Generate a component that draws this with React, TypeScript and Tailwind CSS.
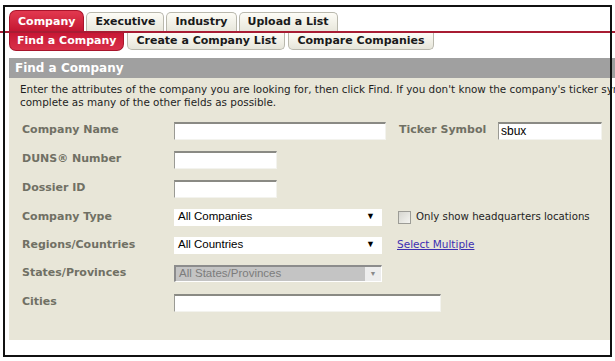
import React from "react"

const verdana = { fontFamily: '"DejaVu Sans", Verdana, sans-serif' }
const arial = { fontFamily: '"Liberation Sans", Arial, sans-serif' }

const TopTab = ({ label, active }: { label: string; active?: boolean }) =>
  active ? (
    <div className="h-[21px] px-[8px] pt-[3px] rounded-t-[7px] bg-gradient-to-b from-[#e2384f] to-[#c41532] text-white text-[11px] font-bold border border-b-0 border-[#a8142b]">
      {label}
    </div>
  ) : (
    <div className="h-[19px] px-[8px] pt-[1px] rounded-t-[5px] bg-gradient-to-b from-[#fdfcf6] to-[#e8e7dc] text-[#1a1a1a] text-[11px] font-bold border border-b-0 border-[#b9b8ad]">
      {label}
    </div>
  )

const SubTab = ({ label, active }: { label: string; active?: boolean }) =>
  active ? (
    <div className="h-[18px] px-[7px] rounded-b-[7px] bg-gradient-to-b from-[#c81634] to-[#d9304a] text-white text-[11px] font-bold leading-[16px] border border-t-0 border-[#a8142b]">
      {label}
    </div>
  ) : (
    <div className="h-[17px] px-[8px] rounded-b-[5px] bg-gradient-to-b from-[#fdfcf6] to-[#e6e5da] text-[#1a1a1a] text-[11px] font-bold leading-[15px] border border-t-0 border-[#b9b8ad]">
      {label}
    </div>
  )

const TextBox = ({ w, value }: { w: string; value?: string }) => (
  <div
    className={`${w} h-[18px] shrink-0 bg-white border-t-2 border-l border-t-[#8a8a84] border-l-[#9a9a94] border-r border-b border-r-[#f3f3ee] border-b-[#f3f3ee] text-[12px] text-black leading-[15px] pl-[2px]`}
    style={arial}
  >
    {value}
  </div>
)

const Select = ({ value, disabled }: { value: string; disabled?: boolean }) =>
  disabled ? (
    <div className="w-[208px] h-[17px] shrink-0 flex items-center bg-[#c4c4c4] border-t-2 border-l-2 border-t-[#8c8c8c] border-l-[#8c8c8c] border-b border-r border-b-white border-r-white" style={arial}>
      <span className="flex-1 pl-[3px] text-[11.5px] text-[#7c7c7c] leading-none">{value}</span>
      <span className="w-[16px] h-[14px] bg-[#ededed] flex items-center justify-center text-[7px] text-[#8a8a8a]">▼</span>
    </div>
  ) : (
    <div className="w-[208px] h-[17px] shrink-0 flex items-center bg-white" style={arial}>
      <span className="flex-1 pl-[4px] text-[11.5px] text-black leading-none">{value}</span>
      <span className="w-[14px] text-[9px] text-black mr-[2px]">▼</span>
    </div>
  )

const Row = ({ label, children, h }: { label: string; children: React.ReactNode; h: string }) => (
  <div className={`flex items-center ${h}`}>
    <div className="w-[152px] shrink-0 text-[11px] font-bold text-[#707064] whitespace-nowrap">{label}</div>
    {children}
  </div>
)

export default function App() {
  return (
    <div className="relative w-[615px] h-[361px] bg-white overflow-hidden" style={verdana}>
      <div className="pt-[10px] border-b-2 border-[#a81c33]">
        <div className="flex items-end gap-[2px] pl-[9px]">
          <TopTab label="Company" active />
          <TopTab label="Executive" />
          <TopTab label="Industry" />
          <TopTab label="Upload a List" />
        </div>
      </div>
      <div className="flex items-start gap-[3px] pl-[9px]">
        <SubTab label="Find a Company" active />
        <SubTab label="Create a Company List" />
        <SubTab label="Compare Companies" />
      </div>

      <div className="ml-[9px] mt-[7px]">
        <div className="h-[20px] bg-[#a0a0a0] text-white text-[12px] font-bold pl-[6px] leading-[20px]">
          Find a Company
        </div>
        <div className="bg-[#e8e6d8] h-[262px] pl-[11px] pt-[5px] w-[601px]">
          <p className="text-[10.4px] leading-[12.5px] text-[#1e1e1e] whitespace-nowrap">
            Enter the attributes of the company you are looking for, then click Find. If you don't know the company's ticker symbol,
            <br />
            complete as many of the other fields as possible.
          </p>
          <div className="mt-[8px] pl-[2px] flex flex-col">
            <Row label="Company Name" h="h-[29px]">
              <TextBox w="w-[212px]" />
              <div className="ml-[13px] w-[99px] shrink-0 whitespace-nowrap text-[11px] font-bold text-[#707064]">Ticker Symbol</div>
              <TextBox w="w-[104px]" value="sbux" />
            </Row>
            <Row label="DUNS® Number" h="h-[29px]">
              <TextBox w="w-[103px]" />
            </Row>
            <Row label="Dossier ID" h="h-[29px]">
              <TextBox w="w-[103px]" />
            </Row>
            <Row label="Company Type" h="h-[28px]">
              <Select value="All Companies" />
              <div className="ml-[16px] w-[13px] h-[13px] shrink-0 bg-gradient-to-br from-[#d6d6d0] to-[#f4f4f0] border border-[#9c9c96]" />
              <span className="ml-[5px] text-[10.2px] text-[#1e1e1e] whitespace-nowrap">Only show headquarters locations</span>
            </Row>
            <Row label="Regions/Countries" h="h-[28px]">
              <Select value="All Countries" />
              <a href="#" className="ml-[15px] text-[10.5px] text-[#3d2fb2] underline">Select Multiple</a>
            </Row>
            <Row label="States/Provinces" h="h-[29px]">
              <Select value="All States/Provinces" disabled />
            </Row>
            <Row label="Cities" h="h-[29px]">
              <TextBox w="w-[267px]" />
            </Row>
          </div>
        </div>
      </div>

      <div className="absolute left-[3px] top-[5px] w-[609px] h-[352px] border-[2px] border-[#111] pointer-events-none" />
    </div>
  )
}
